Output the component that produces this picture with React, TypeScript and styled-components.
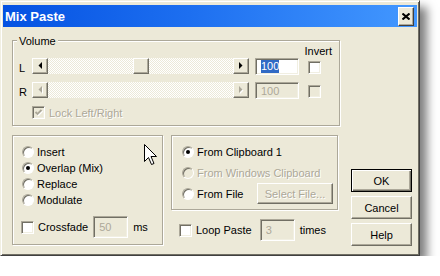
import React from 'react';
import styled, { createGlobalStyle } from 'styled-components';

const face = '#ECE9D8';
const shade = '#ACA899';
const dark = '#716F64';
const light = '#F1EFE2';

const GlobalStyle = createGlobalStyle`
  html, body {
    margin: 0;
    padding: 0;
    background: #fff;
  }
  body {
    font-family: "Liberation Sans", Arial, sans-serif;
    font-size: 11px;
    color: #000;
  }
`;

const Window = styled.div`
  position: relative;
  width: 420px;
  height: 256px;
  box-sizing: border-box;
  background: ${face};
  border: 1px solid;
  border-color: ${light} #404040 #404040 ${light};
  box-shadow: inset 1px 1px #fff, inset -1px -1px ${dark}, 7px 7px 9px rgba(0, 0, 0, 0.5);
  padding: 4px 2px 2px 2px;
  display: flex;
  flex-direction: column;
`;

const TitleBar = styled.div`
  height: 22px;
  display: flex;
  align-items: center;
  justify-content: space-between;
  padding: 0 3px 0 2px;
  background: linear-gradient(90deg, #0552e2 0%, #1d6ff0 45%, #4398ff 100%);
  color: #fff;
  font-weight: bold;
  font-size: 13px;
`;

const CloseButton = styled.div`
  width: 16px;
  height: 19px;
  box-sizing: border-box;
  background: ${face};
  border: 1px solid;
  border-color: #fff #404040 #404040 #fff;
  box-shadow: inset -1px -1px ${shade};
  display: flex;
  align-items: center;
  justify-content: center;
`;

const Client = styled.div`
  flex: 1;
  display: flex;
  padding: 13px 0 0 9px;
`;

const LeftCol = styled.div`
  width: 328px;
  display: flex;
  flex-direction: column;
`;

const GroupBox = styled.div<{ $w: number; $h: number }>`
  position: relative;
  box-sizing: border-box;
  width: ${p => p.$w}px;
  height: ${p => p.$h}px;
  border: 1px solid ${shade};
  box-shadow: inset 1px 1px #fff, 1px 1px #fff;
`;

const Legend = styled.span`
  position: absolute;
  top: -6px;
  left: 4px;
  padding: 0 2px;
  line-height: 13px;
  background: ${face};
`;

const VolumeBody = styled.div`
  padding: 4px 7px 0 6px;
  display: flex;
  flex-direction: column;
`;

const InvertHeader = styled.div`
  height: 13px;
  line-height: 13px;
  text-align: right;
`;

const VolRow = styled.div<{ $gap?: number }>`
  display: flex;
  align-items: flex-start;
  height: 17px;
  margin-top: ${p => p.$gap ?? 0}px;
`;

const ChannelLabel = styled.span<{ $disabled?: boolean }>`
  width: 13px;
  line-height: 17px;
  padding-top: 2px;
  color: ${p => (p.$disabled ? '#000' : '#000')};
`;

const Slider = styled.div`
  width: 217px;
  height: 16px;
  display: flex;
`;

const raised = `
  box-sizing: border-box;
  background: ${face};
  border: 1px solid;
  border-color: #fff ${dark} ${dark} #fff;
  box-shadow: inset -1px -1px ${shade};
`;

const ArrowButton = styled.div`
  ${raised}
  width: 16px;
  height: 16px;
  display: flex;
  align-items: center;
  justify-content: center;
`;

const Track = styled.div`
  flex: 1;
  display: flex;
  background: repeating-conic-gradient(#fff 0 25%, ${face} 0 50%) 0 0 / 2px 2px;
`;

const Thumb = styled.div<{ $offset: number }>`
  ${raised}
  width: 16px;
  height: 16px;
  margin-left: ${p => p.$offset}px;
`;

const Edit = styled.div<{ $w: number; $h: number; $disabled?: boolean }>`
  box-sizing: border-box;
  width: ${p => p.$w}px;
  height: ${p => p.$h}px;
  background: ${p => (p.$disabled ? face : '#fff')};
  color: ${p => (p.$disabled ? shade : '#000')};
  border: 1px solid;
  border-color: ${shade} #fff #fff ${shade};
  box-shadow: inset 1px 1px ${dark}, inset -1px -1px ${light};
  padding-left: 5px;
  display: flex;
  align-items: center;
`;

const Selected = styled.span`
  background: #316ac5;
  color: #fff;
  line-height: 13px;
`;

const Check = styled.div<{ $disabled?: boolean; $ml?: number; $mt?: number }>`
  box-sizing: border-box;
  width: 13px;
  height: 13px;
  flex: none;
  margin-left: ${p => p.$ml ?? 0}px;
  margin-top: ${p => p.$mt ?? 0}px;
  background: ${p => (p.$disabled ? face : '#fff')};
  border: 1px solid;
  border-color: ${shade} #fff #fff ${shade};
  box-shadow: inset 1px 1px ${dark}, inset -1px -1px ${light};
  display: flex;
  align-items: center;
  justify-content: center;
`;

const Label = styled.span<{ $disabled?: boolean; $ml?: number }>`
  margin-left: ${p => p.$ml ?? 0}px;
  white-space: nowrap;
  color: ${p => (p.$disabled ? shade : '#000')};
  text-shadow: ${p => (p.$disabled ? '1px 1px #fff' : 'none')};
`;

const LockRow = styled.div`
  display: flex;
  align-items: center;
  height: 13px;
  margin: 7px 0 0 13px;
`;

const LowerArea = styled.div`
  display: flex;
  gap: 8px;
  margin-top: 9px;
`;

const ModeBody = styled.div`
  padding: 8px 0 0 9px;
`;

const RadioRow = styled.div<{ $h: number }>`
  display: flex;
  align-items: center;
  height: ${p => p.$h}px;
`;

const Radio = styled.div<{ $checked?: boolean; $disabled?: boolean }>`
  box-sizing: border-box;
  width: 12px;
  height: 12px;
  flex: none;
  margin-right: 3px;
  border-radius: 50%;
  background: ${p => (p.$disabled ? face : '#fff')};
  border: 1px solid;
  border-color: ${shade} #fff #fff ${shade};
  box-shadow: inset 1px 1px ${dark};
  display: flex;
  align-items: center;
  justify-content: center;

  &::after {
    content: '';
    display: ${p => (p.$checked ? 'block' : 'none')};
    width: 4px;
    height: 4px;
    border-radius: 50%;
    background: #000;
  }
`;

const OptionRow = styled.div<{ $mt: number; $ml: number }>`
  display: flex;
  align-items: center;
  margin: ${p => p.$mt}px 0 0 ${p => p.$ml}px;
`;

const RightArea = styled.div`
  display: flex;
  flex-direction: column;
`;

const SourceBody = styled.div`
  padding: 5px 4px 0 10px;
`;

const PushButton = styled.div<{ $w: number; $h: number; $default?: boolean; $disabled?: boolean }>`
  box-sizing: border-box;
  width: ${p => p.$w}px;
  height: ${p => p.$h}px;
  margin-left: auto;
  background: ${face};
  border: 1px solid;
  border-color: ${p => (p.$default ? '#000' : `#fff ${dark} ${dark} #fff`)};
  box-shadow: ${p =>
    p.$default
      ? `inset 1px 1px #fff, inset -1px -1px ${dark}, inset -2px -2px ${shade}`
      : `inset -1px -1px ${shade}`};
  display: flex;
  align-items: center;
  justify-content: center;
  color: ${p => (p.$disabled ? shade : '#000')};
  text-shadow: ${p => (p.$disabled ? '1px 1px #fff' : 'none')};
`;

const ButtonCol = styled.div`
  display: flex;
  flex-direction: column;
  gap: 4px;
  margin-left: 11px;
  padding-top: 129px;
`;

const Cursor = styled.svg`
  position: absolute;
  left: 143px;
  top: 143px;
`;

const ArrowIcon = ({ dir, disabled }: { dir: 'left' | 'right'; disabled?: boolean }) => {
  const pts = dir === 'left' ? '4,0 4,7 0.5,3.5' : '0,0 0,7 3.5,3.5';
  return (
    <svg width="5" height="8" viewBox="0 0 5 8">
      {disabled && <polygon points={pts} fill="#fff" transform="translate(1,1)" />}
      <polygon points={pts} fill={disabled ? shade : '#000'} />
    </svg>
  );
};

const CheckMark = ({ disabled }: { disabled?: boolean }) => (
  <svg width="9" height="9" viewBox="0 0 9 9">
    {disabled && <polyline points="1.5,4 3.5,6 7.5,2" fill="none" stroke="#fff" strokeWidth="1.8" transform="translate(1,1)" />}
    <polyline points="1.5,4 3.5,6 7.5,2" fill="none" stroke={disabled ? shade : '#000'} strokeWidth="1.8" />
  </svg>
);

const HSlider = ({ thumb, disabled }: { thumb?: number; disabled?: boolean }) => (
  <Slider>
    <ArrowButton>
      <ArrowIcon dir="left" disabled={disabled} />
    </ArrowButton>
    <Track>{thumb !== undefined && <Thumb $offset={thumb} />}</Track>
    <ArrowButton>
      <ArrowIcon dir="right" disabled={disabled} />
    </ArrowButton>
  </Slider>
);

export default function App() {
  return (
    <>
      <GlobalStyle />
      <Window>
        <TitleBar>
          <span>Mix Paste</span>
          <CloseButton>
            <svg width="8" height="7" viewBox="0 0 8 7">
              <path d="M0.5 0.5 L7.5 6.5 M7.5 0.5 L0.5 6.5" stroke="#000" strokeWidth="2" />
            </svg>
          </CloseButton>
        </TitleBar>
        <Client>
          <LeftCol>
            <GroupBox $w={328} $h={86}>
              <Legend>Volume</Legend>
              <VolumeBody>
                <InvertHeader>Invert</InvertHeader>
                <VolRow>
                  <ChannelLabel>L</ChannelLabel>
                  <HSlider thumb={85} />
                  <Edit $w={44} $h={17} style={{ marginLeft: 6 }}>
                    <Selected>100</Selected>
                  </Edit>
                  <Check $ml={9} $mt={3} />
                </VolRow>
                <VolRow $gap={7}>
                  <ChannelLabel>R</ChannelLabel>
                  <HSlider disabled />
                  <Edit $w={44} $h={17} $disabled style={{ marginLeft: 6 }}>
                    100
                  </Edit>
                  <Check $ml={9} $mt={3} $disabled />
                </VolRow>
                <LockRow>
                  <Check $disabled>
                    <CheckMark disabled />
                  </Check>
                  <Label $disabled $ml={4}>
                    Lock Left/Right
                  </Label>
                </LockRow>
              </VolumeBody>
            </GroupBox>
            <LowerArea>
              <GroupBox $w={151} $h={110}>
                <ModeBody>
                  <RadioRow $h={16}>
                    <Radio />
                    <Label>Insert</Label>
                  </RadioRow>
                  <RadioRow $h={16}>
                    <Radio $checked />
                    <Label>Overlap (Mix)</Label>
                  </RadioRow>
                  <RadioRow $h={16}>
                    <Radio />
                    <Label>Replace</Label>
                  </RadioRow>
                  <RadioRow $h={16}>
                    <Radio />
                    <Label>Modulate</Label>
                  </RadioRow>
                  <OptionRow $mt={8} $ml={-1}>
                    <Check />
                    <Label $ml={4}>Crossfade</Label>
                    <Edit $w={35} $h={22} $disabled style={{ marginLeft: 5 }}>
                      50
                    </Edit>
                    <Label $ml={5}>ms</Label>
                  </OptionRow>
                </ModeBody>
              </GroupBox>
              <RightArea>
                <GroupBox $w={167} $h={75}>
                  <SourceBody>
                    <RadioRow $h={21}>
                      <Radio $checked />
                      <Label>From Clipboard 1</Label>
                    </RadioRow>
                    <RadioRow $h={21}>
                      <Radio $disabled />
                      <Label $disabled>From Windows Clipboard</Label>
                    </RadioRow>
                    <RadioRow $h={21}>
                      <Radio />
                      <Label>From File</Label>
                      <PushButton $w={76} $h={21} $disabled>
                        Select File...
                      </PushButton>
                    </RadioRow>
                  </SourceBody>
                </GroupBox>
                <OptionRow $mt={9} $ml={8}>
                  <Check />
                  <Label $ml={4}>Loop Paste</Label>
                  <Edit $w={35} $h={22} $disabled style={{ marginLeft: 8 }}>
                    3
                  </Edit>
                  <Label $ml={5}>times</Label>
                </OptionRow>
              </RightArea>
            </LowerArea>
          </LeftCol>
          <ButtonCol>
            <PushButton $w={61} $h={23} $default>
              OK
            </PushButton>
            <PushButton $w={61} $h={23}>
              Cancel
            </PushButton>
            <PushButton $w={61} $h={23}>
              Help
            </PushButton>
          </ButtonCol>
        </Client>
        <Cursor width="14" height="22" viewBox="0 0 14 22">
          <path
            d="M0.5 0.5 L0.5 17.5 L4.5 13.5 L7.5 20.5 L10 19.5 L7 12.5 L12.5 12.5 Z"
            fill="#fff"
            stroke="#000"
            strokeWidth="1"
            strokeLinejoin="miter"
          />
        </Cursor>
      </Window>
    </>
  );
}
